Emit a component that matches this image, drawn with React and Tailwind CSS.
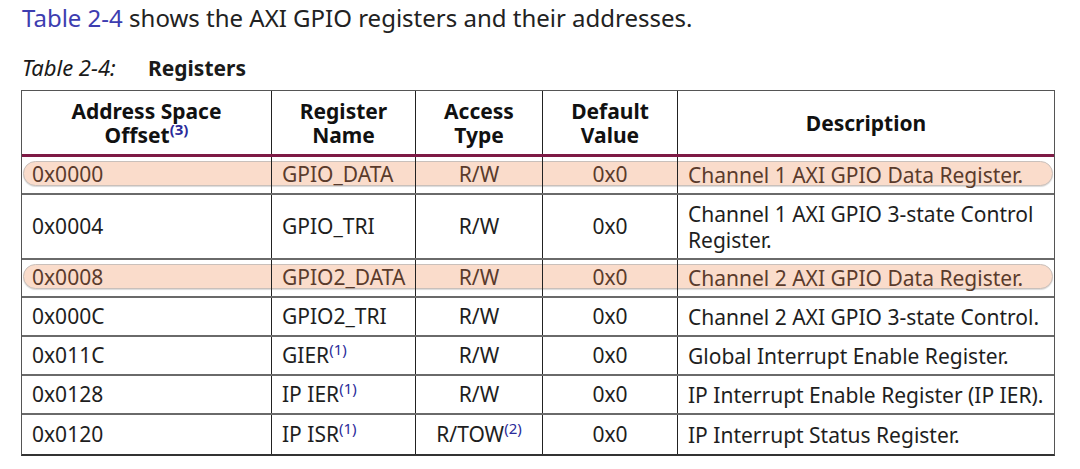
const rows = [
  { off: '0x0000', name: 'GPIO_DATA', acc: 'R/W', def: '0x0', desc: ['Channel 1 AXI GPIO Data Register.'], hi: true },
  { off: '0x0004', name: 'GPIO_TRI', acc: 'R/W', def: '0x0', desc: ['Channel 1 AXI GPIO 3-state Control', 'Register.'], tall: true },
  { off: '0x0008', name: 'GPIO2_DATA', acc: 'R/W', def: '0x0', desc: ['Channel 2 AXI GPIO Data Register.'], hi: true },
  { off: '0x000C', name: 'GPIO2_TRI', acc: 'R/W', def: '0x0', desc: ['Channel 2 AXI GPIO 3-state Control.'] },
  { off: '0x011C', name: 'GIER', nameSup: '(1)', acc: 'R/W', def: '0x0', desc: ['Global Interrupt Enable Register.'] },
  { off: '0x0128', name: 'IP IER', nameSup: '(1)', acc: 'R/W', def: '0x0', desc: ['IP Interrupt Enable Register (IP IER).'] },
  { off: '0x0120', name: 'IP ISR', nameSup: '(1)', acc: 'R/TOW', accSup: '(2)', def: '0x0', desc: ['IP Interrupt Status Register.'] },
];

const cols = 'grid grid-cols-[250px_144px_127px_135px_1fr]';

const Sup = ({ children }) => (
  <sup className="text-[15px] text-[#2b2b9a] top-[-0.5em]">{children}</sup>
);

const Row = ({ r, last }) => {
  const text = r.hi ? 'text-[#5a3b2c]' : 'text-[#1e1e1e]';
  const h = r.tall ? 'h-[65px]' : r.hi ? 'h-[38px]' : 'h-[39px]';
  return (
    <div className={`relative ${cols} ${h} ${last ? '' : 'border-b-2 border-[#6a6a6a]'}`}>
      {r.hi && (
        <div className="absolute left-[1px] right-[1px] top-[4px] bottom-[7px] rounded-full bg-[#fadccb] border border-[#c9c0bb] shadow-[0_1px_1px_rgba(0,0,0,0.15)]" />
      )}
      <div className={`relative flex items-center pl-[10px] border-r border-[#222] ${text}`}>{r.off}</div>
      <div className={`relative flex items-center pl-[10px] border-r border-[#222] ${text}`}>
        <span>{r.name}{r.nameSup && <Sup>{r.nameSup}</Sup>}</span>
      </div>
      <div className={`relative flex items-center justify-center border-r border-[#222] ${text}`}>
        <span>{r.acc}{r.accSup && <Sup>{r.accSup}</Sup>}</span>
      </div>
      <div className={`relative flex items-center justify-center border-r border-[#222] ${text}`}>{r.def}</div>
      <div className={`relative flex flex-col justify-center pl-[10px] leading-[26px] ${text}`}>
        {r.desc.map((d) => (
          <span key={d} className="whitespace-nowrap">{d}</span>
        ))}
      </div>
    </div>
  );
};

export default function App() {
  return (
    <div className="w-[1080px] h-[469px] bg-white font-['Noto_Sans',sans-serif] text-[21px] text-[#1e1e1e] overflow-hidden">
      <p className="pl-[22px] pt-[2px] text-[24px] leading-[32px] text-[#222] whitespace-nowrap">
        <span className="text-[#3d3db0]">Table 2-4</span> shows the AXI GPIO registers and their addresses.
      </p>
      <div className="pl-[22px] mt-[19px] flex items-baseline leading-[28px] text-[#1a1a1a]">
        <span className="italic text-[22px] w-[126px]">Table 2-4:</span>
        <span className="font-bold text-[21px]">Registers</span>
      </div>
      <div className="ml-[21px] mt-[8px] w-[1034px] border border-[#555] border-b-2 border-b-[#333]">
        <div className={`${cols} h-[66px] border-b-[3px] border-[#7e1a45] font-bold leading-[24px] text-[#111]`}>
          <div className="flex flex-col items-center justify-center border-r border-[#222]">
            <span>Address Space</span>
            <span>Offset<Sup>(3)</Sup></span>
          </div>
          <div className="flex flex-col items-center justify-center border-r border-[#222]">
            <span>Register</span>
            <span>Name</span>
          </div>
          <div className="flex flex-col items-center justify-center border-r border-[#222]">
            <span>Access</span>
            <span>Type</span>
          </div>
          <div className="flex flex-col items-center justify-center border-r border-[#222]">
            <span>Default</span>
            <span>Value</span>
          </div>
          <div className="flex items-center justify-center">Description</div>
        </div>
        {rows.map((r, i) => (
          <Row key={r.off} r={r} last={i === rows.length - 1} />
        ))}
      </div>
    </div>
  );
}
